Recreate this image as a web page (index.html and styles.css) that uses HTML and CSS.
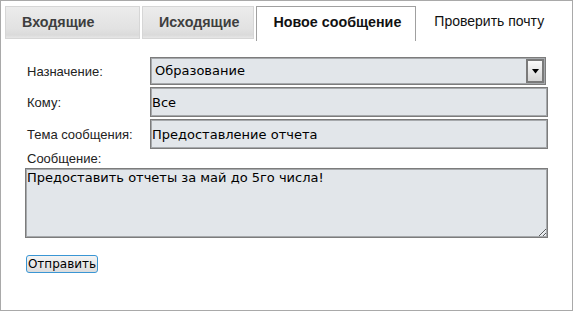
FILE: index.html
```html
<!DOCTYPE html>
<html lang="ru">
<head>
  <meta charset="UTF-8">
  <meta name="viewport" content="width=device-width, initial-scale=1.0">
  <title>Почта</title>
  <link rel="stylesheet" href="styles.css">
</head>
<body>
  <div class="frame">
    <nav class="tabs">
      <div class="tab tab-first">Входящие</div>
      <div class="tab">Исходящие</div>
      <div class="tab active">Новое сообщение</div>
      <div class="tab plain">Проверить почту</div>
    </nav>
    <form class="compose" onsubmit="return false">
      <div class="fields">
        <label>Назначение:</label>
        <div class="select">
          <span class="select-value">Образование</span>
          <span class="select-btn">
            <svg width="7" height="5" viewBox="0 0 7 5"><polygon points="0,0 7,0 3.5,4.5" fill="#000"/></svg>
          </span>
        </div>
        <label>Кому:</label>
        <input class="field" type="text" value="Все">
        <label>Тема сообщения:</label>
        <input class="field" type="text" value="Предоставление отчета">
      </div>
      <label class="msg-label">Сообщение:</label>
      <textarea class="message">Предоставить отчеты за май до 5го числа!</textarea>
      <button class="send" type="submit">Отправить</button>
    </form>
  </div>
</body>
</html>
```

FILE: styles.css
```css
* { box-sizing: border-box; }
body { margin: 0; font-family: "Liberation Sans", Arial, sans-serif; background: #fff; }
.frame { width: 573px; height: 311px; border: 1px solid #a9a9a9; }

.tabs { display: flex; align-items: flex-start; gap: 2px; padding: 5px 0 0 4px; }
.tab { height: 33px; line-height: 31px; padding: 0 14px 0 16px; font-size: 14.3px; font-weight: bold; color: #3e3e3e;
  border: 1px solid #d6d6d6; background: linear-gradient(#ececec, #e2e2e2 70%, #dadada 90%, #e6e6e6); }
.tab-first { width: 135px; }
.tab.active { height: 35px; color: #111; background: #fff; border-color: #a0a0a0; border-bottom: none; }
.tab.plain { border: none; background: none; font-size: 14px; font-weight: normal; color: #111; padding-left: 16px; }

.compose { padding: 16px 0 0 24px; }
.fields { display: grid; grid-template-columns: 125px 398px; grid-template-rows: 28px 30px 30px; row-gap: 2px; align-items: center; }
.fields label, .msg-label { font-size: 13px; color: #222; padding-left: 2px; }

.select { display: flex; align-items: stretch; width: 396px; height: 28px; background: #e2e6ea;
  border: 1px solid #7c7c7c; box-shadow: inset 0 0 0 1px #a6a9ac; }
.select-value { flex: 1; padding-left: 4px; font: 13px/26px "DejaVu Sans", Verdana, sans-serif; color: #000; }
.select-btn { width: 18px; margin: 1px; display: flex; align-items: center; justify-content: center;
  border: 2px solid #7a7a7a; background: linear-gradient(#fafafa, #d6d6d6); }

.field { height: 100%; width: 398px; margin: 0; padding: 0 1px; background: #e2e6ea; color: #000;
  font: 13px "DejaVu Sans", Verdana, sans-serif; border: 1px solid #7c7c7c; box-shadow: inset 0 0 0 1px #a6a9ac; outline: none; }

.msg-label { display: block; line-height: 16px; margin-top: 2px; }
.message { display: block; width: 523px; height: 70px; margin: 1px 0 0 0; padding: 1px 1px; resize: both;
  background: #e2e6ea; color: #000; font: 13px/16px "DejaVu Sans", Verdana, sans-serif;
  border: 1px solid #7c7c7c; box-shadow: inset 0 0 0 1px #a6a9ac; outline: none; }

.send { display: block; margin: 17px 0 0 1px; height: 18px; width: 72px; padding: 0; font: 12px/14px "DejaVu Sans", Verdana, sans-serif; color: #000;
  border: 1px solid #3a96d4; border-radius: 3px; background: linear-gradient(#f4f4f4, #dcdcdc); }
```
